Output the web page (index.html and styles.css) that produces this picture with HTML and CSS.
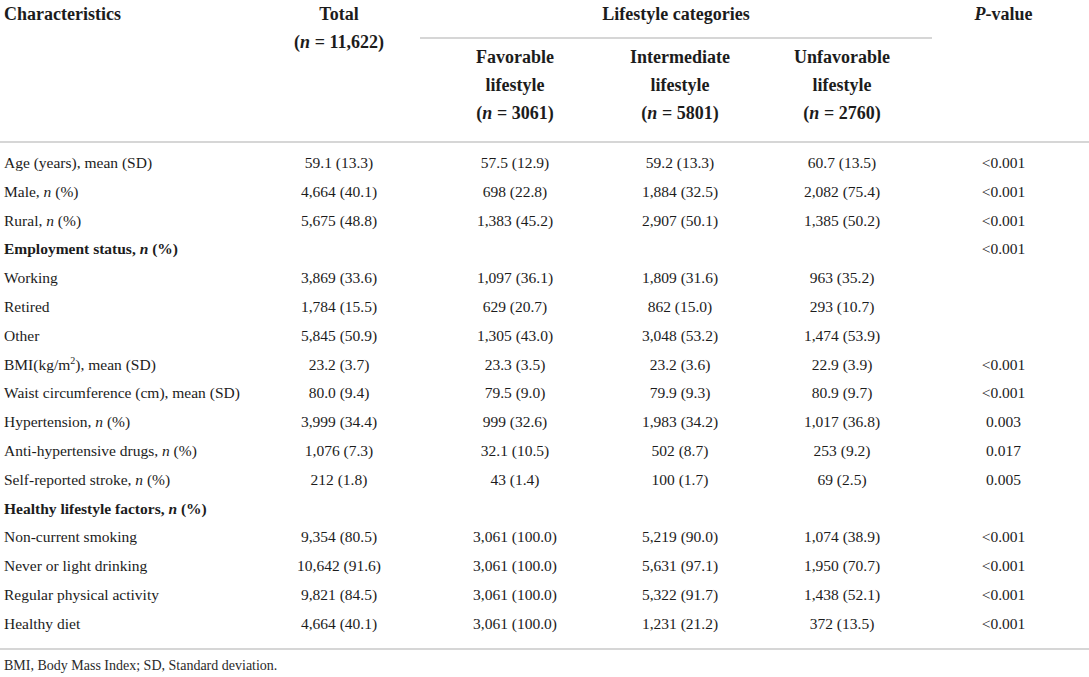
FILE: index.html
```html
<!doctype html>
<html>
  <head>
    <meta charset="UTF-8">
    <title>Characteristics by lifestyle categories</title>
    <link rel="stylesheet" href="styles.css">
  </head>
  <body>
    <table class="stats">
      <colgroup>
        <col class="col-label">
        <col class="col-total">
        <col class="col-fav">
        <col class="col-mid">
        <col class="col-unfav">
        <col class="col-p">
      </colgroup>
      <thead>
        <tr class="head-top">
          <th rowspan="2" class="label">Characteristics</th>
          <th rowspan="2" class="total">Total<br>(<i>n</i> = 11,622)</th>
          <th colspan="3" class="group"><span class="group-title">Lifestyle categories</span></th>
          <th rowspan="2" class="pval"><i>P</i>-value</th>
        </tr>
        <tr class="head-sub">
          <th>Favorable<br>lifestyle<br>(<i>n</i> = 3061)</th>
          <th>Intermediate<br>lifestyle<br>(<i>n</i> = 5801)</th>
          <th class="unfav">Unfavorable<br>lifestyle<br>(<i>n</i> = 2760)</th>
        </tr>
      </thead>
      <tbody>
        <tr class="first"><td class="label">Age (years), mean (SD)</td><td class="total">59.1 (13.3)</td><td>57.5 (12.9)</td><td>59.2 (13.3)</td><td class="unfav">60.7 (13.5)</td><td class="pval">&lt;0.001</td></tr>
        <tr><td class="label">Male, <i>n</i> (%)</td><td class="total">4,664 (40.1)</td><td>698 (22.8)</td><td>1,884 (32.5)</td><td class="unfav">2,082 (75.4)</td><td class="pval">&lt;0.001</td></tr>
        <tr><td class="label">Rural, <i>n</i> (%)</td><td class="total">5,675 (48.8)</td><td>1,383 (45.2)</td><td>2,907 (50.1)</td><td class="unfav">1,385 (50.2)</td><td class="pval">&lt;0.001</td></tr>
        <tr><td class="label"><b>Employment status, <i>n</i> (%)</b></td><td class="total"></td><td></td><td></td><td class="unfav"></td><td class="pval">&lt;0.001</td></tr>
        <tr><td class="label">Working</td><td class="total">3,869 (33.6)</td><td>1,097 (36.1)</td><td>1,809 (31.6)</td><td class="unfav">963 (35.2)</td><td class="pval"></td></tr>
        <tr><td class="label">Retired</td><td class="total">1,784 (15.5)</td><td>629 (20.7)</td><td>862 (15.0)</td><td class="unfav">293 (10.7)</td><td class="pval"></td></tr>
        <tr><td class="label">Other</td><td class="total">5,845 (50.9)</td><td>1,305 (43.0)</td><td>3,048 (53.2)</td><td class="unfav">1,474 (53.9)</td><td class="pval"></td></tr>
        <tr><td class="label">BMI(kg/m<sup>2</sup>), mean (SD)</td><td class="total">23.2 (3.7)</td><td>23.3 (3.5)</td><td>23.2 (3.6)</td><td class="unfav">22.9 (3.9)</td><td class="pval">&lt;0.001</td></tr>
        <tr><td class="label">Waist circumference (cm), mean (SD)</td><td class="total">80.0 (9.4)</td><td>79.5 (9.0)</td><td>79.9 (9.3)</td><td class="unfav">80.9 (9.7)</td><td class="pval">&lt;0.001</td></tr>
        <tr><td class="label">Hypertension, <i>n</i> (%)</td><td class="total">3,999 (34.4)</td><td>999 (32.6)</td><td>1,983 (34.2)</td><td class="unfav">1,017 (36.8)</td><td class="pval">0.003</td></tr>
        <tr><td class="label">Anti-hypertensive drugs, <i>n</i> (%)</td><td class="total">1,076 (7.3)</td><td>32.1 (10.5)</td><td>502 (8.7)</td><td class="unfav">253 (9.2)</td><td class="pval">0.017</td></tr>
        <tr><td class="label">Self-reported stroke, <i>n</i> (%)</td><td class="total">212 (1.8)</td><td>43 (1.4)</td><td>100 (1.7)</td><td class="unfav">69 (2.5)</td><td class="pval">0.005</td></tr>
        <tr><td class="label"><b>Healthy lifestyle factors, <i>n</i> (%)</b></td><td class="total"></td><td></td><td></td><td class="unfav"></td><td class="pval"></td></tr>
        <tr><td class="label">Non-current smoking</td><td class="total">9,354 (80.5)</td><td>3,061 (100.0)</td><td>5,219 (90.0)</td><td class="unfav">1,074 (38.9)</td><td class="pval">&lt;0.001</td></tr>
        <tr><td class="label">Never or light drinking</td><td class="total">10,642 (91.6)</td><td>3,061 (100.0)</td><td>5,631 (97.1)</td><td class="unfav">1,950 (70.7)</td><td class="pval">&lt;0.001</td></tr>
        <tr><td class="label">Regular physical activity</td><td class="total">9,821 (84.5)</td><td>3,061 (100.0)</td><td>5,322 (91.7)</td><td class="unfav">1,438 (52.1)</td><td class="pval">&lt;0.001</td></tr>
        <tr class="last"><td class="label">Healthy diet</td><td class="total">4,664 (40.1)</td><td>3,061 (100.0)</td><td>1,231 (21.2)</td><td class="unfav">372 (13.5)</td><td class="pval">&lt;0.001</td></tr>
      </tbody>
    </table>
    <p class="note">BMI, Body Mass Index; SD, Standard deviation.</p>
  </body>
</html>
```

FILE: styles.css
```css
* {
    box-sizing: border-box;
}

body {
    margin: 0;
    background: #fff;
    color: #1c1c1c;
    font-family: "Liberation Serif", "Times New Roman", serif;
    font-size: 15.5px;
}

.stats {
    width: 1089px;
    border-collapse: collapse;
    table-layout: fixed;
}

.col-label { width: 250px; }
.col-total { width: 170px; }
.col-fav { width: 190px; }
.col-mid { width: 140px; }
.col-unfav { width: 176px; }
.col-p { width: 163px; }

th, td {
    padding: 0 4px;
    text-align: center;
    font-weight: normal;
}

.label {
    text-align: left;
}

.total,
.unfav {
    padding-left: 12px;
}

.pval {
    padding-right: 12px;
}

thead th {
    font-size: 18px;
    font-weight: bold;
    line-height: 28px;
    vertical-align: top;
}

.group {
    padding: 0;
}

.group-title {
    display: block;
    margin-right: -6px;
    padding-bottom: 9px;
    border-bottom: 2px solid #d6d6d6;
}

.head-sub th {
    padding-top: 4px;
    padding-bottom: 14px;
}

thead {
    border-bottom: 2px solid #d6d6d6;
}

tbody td {
    line-height: 28.8px;
}

tbody tr.first td {
    padding-top: 6px;
}

tbody tr.last td {
    padding-bottom: 9px;
}

tbody {
    border-bottom: 2px solid #d6d6d6;
}

sup {
    font-size: 10px;
    line-height: 0;
}

.note {
    margin: 8px 0 0;
    padding-left: 4px;
    font-size: 14px;
    color: #2a2a2a;
}
```
